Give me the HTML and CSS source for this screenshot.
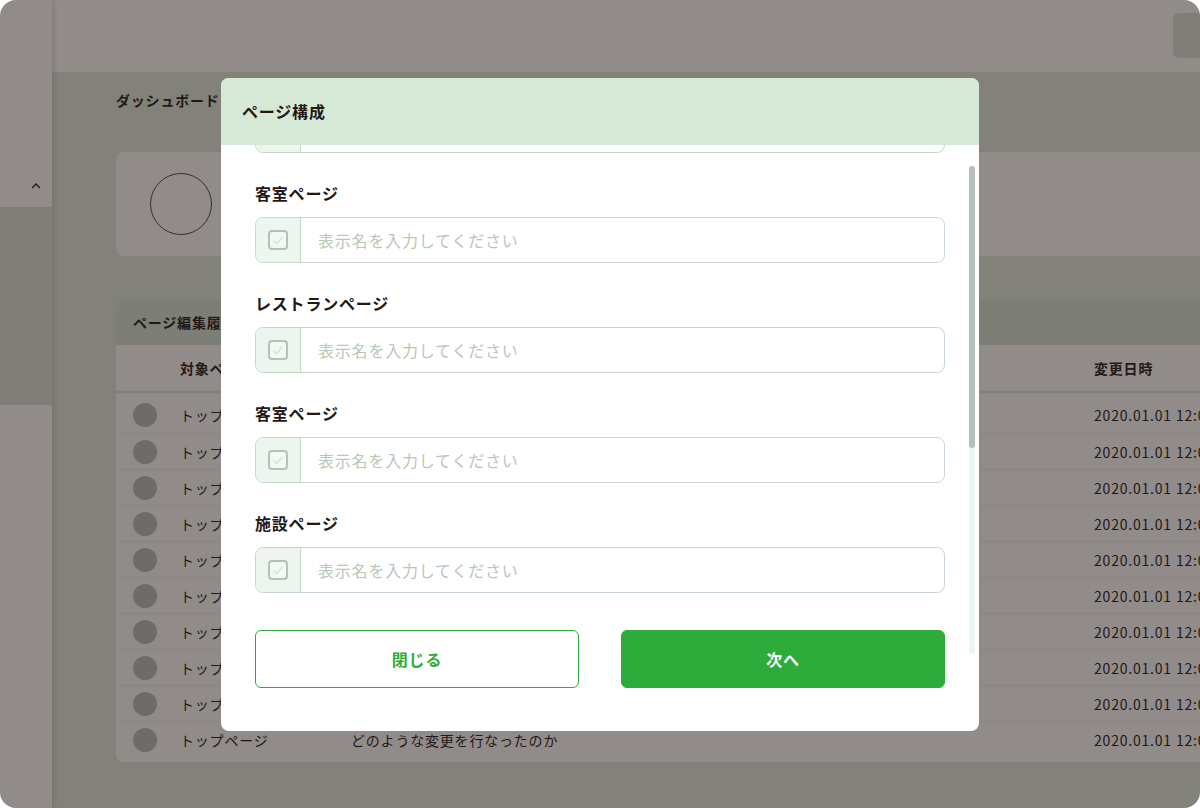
FILE: index.html
```html
<!DOCTYPE html>
<html lang="ja">
<head>
  <meta charset="UTF-8">
  <meta name="viewport" content="width=device-width, initial-scale=1.0">
  <title>ページ構成 - ダッシュボード</title>
  <link rel="stylesheet" href="styles.css">
</head>
<body>
  <div class="app">
    <aside class="sidebar">
      <div class="sidebar-head"></div>
      <div class="sidebar-item">
        <svg class="sidebar-chevron" width="10" height="6" viewBox="0 0 10 6">
          <polyline points="1,5 5,1 9,5" fill="none" stroke="#231815" stroke-width="1.4"/>
        </svg>
      </div>
      <div class="sidebar-sub"></div>
    </aside>

    <div class="page">
      <header class="topbar">
        <div class="topbar-action"></div>
      </header>

      <main class="main">
        <h2 class="main-title">ダッシュボード</h2>

        <section class="profile-card">
          <div class="profile-avatar"></div>
        </section>

        <section class="history">
          <h3 class="history-title">ページ編集履歴</h3>
          <div class="history-head">
            <span></span>
            <span>対象ページ</span>
            <span>変更内容</span>
            <span>変更日時</span>
          </div>
          <div class="history-body" id="historyBody">
            <!-- rows are rendered below -->
          </div>
        </section>
      </main>
    </div>

    <div class="overlay">
      <div class="modal">
        <div class="modal-header">ページ構成</div>
        <div class="modal-body">
          <div class="modal-content">
            <div class="field field-cut">
              <div class="field-box">
                <span class="field-check"></span>
                <input class="field-input" type="text" placeholder="表示名を入力してください">
              </div>
            </div>

            <div class="field">
              <label class="field-label">客室ページ</label>
              <div class="field-box">
                <span class="field-check"></span>
                <input class="field-input" type="text" placeholder="表示名を入力してください">
              </div>
            </div>

            <div class="field">
              <label class="field-label">レストランページ</label>
              <div class="field-box">
                <span class="field-check"></span>
                <input class="field-input" type="text" placeholder="表示名を入力してください">
              </div>
            </div>

            <div class="field">
              <label class="field-label">客室ページ</label>
              <div class="field-box">
                <span class="field-check"></span>
                <input class="field-input" type="text" placeholder="表示名を入力してください">
              </div>
            </div>

            <div class="field">
              <label class="field-label">施設ページ</label>
              <div class="field-box">
                <span class="field-check"></span>
                <input class="field-input" type="text" placeholder="表示名を入力してください">
              </div>
            </div>

            <div class="modal-actions">
              <button class="button button-outline">閉じる</button>
              <button class="button button-primary">次へ</button>
            </div>
          </div>

          <div class="modal-scrollbar">
            <div class="modal-scrollbar-thumb"></div>
          </div>
        </div>
      </div>
    </div>
  </div>

  <script>
    const historyBody = document.getElementById('historyBody');

    // Edit history rows (dummy data)
    for (let i = 0; i < 10; i++) {
      historyBody.innerHTML += `
        <div class="history-row">
          <span class="history-avatar"></span>
          <span>トップページ</span>
          <span>どのような変更を行なったのか</span>
          <span>2020.01.01 12:00</span>
        </div>
      `;
    }

    // Checkbox icon inside every field
    const checkIcon = `
      <svg width="20" height="20" viewBox="0 0 20 20">
        <rect x="1" y="1" width="18" height="18" rx="3" fill="#f4f8f4" stroke="#b3c2b3" stroke-width="2"/>
        <path d="M5.5 10.5l3 3 6-6.5" fill="none" stroke="#d4e1d4" stroke-width="1.3"/>
      </svg>
    `;
    document.querySelectorAll('.field-check').forEach(el => {
      el.innerHTML = checkIcon;
    });
  </script>
</body>
</html>
```

FILE: styles.css
```css
/* Reset & Fonts */
* {
  margin: 0;
  padding: 0;
  box-sizing: border-box;
}

body {
  font-family: 'Noto Sans CJK JP', 'Noto Sans', sans-serif;
  color: #231815;
  background-color: #ffffff;
  letter-spacing: 0.05em;
  overflow: hidden;
}

.app {
  position: relative;
  display: flex;
  width: 1200px;
  height: 808px;
  border-radius: 16px;
  overflow: hidden;
  background-color: #e1ece0;
}

/* Sidebar */
.sidebar {
  position: relative;
  z-index: 1;
  flex: 0 0 52px;
  background-color: #ffffff;
  box-shadow: 2px 0 5px rgba(0, 0, 0, 0.14);
}

.sidebar-head {
  height: 165px;
}

.sidebar-item {
  height: 42px;
  display: flex;
  justify-content: flex-end;
  align-items: center;
  padding-right: 11px;
}

.sidebar-sub {
  height: 198px;
  background-color: #dbe6d9;
}

/* Page */
.page {
  flex: 0 0 1268px;
  display: flex;
  flex-direction: column;
}

.topbar {
  height: 72px;
  background-color: #ffffff;
  display: flex;
  justify-content: flex-end;
  align-items: flex-start;
  padding: 13px 20px 0 0;
}

.topbar-action {
  width: 127px;
  height: 45px;
  border-radius: 6px;
  background-color: #dbe6d9;
}

.main {
  padding: 18px 60px 0 64px;
}

.main-title {
  font-size: 14px;
  font-weight: bold;
  line-height: 20px;
}

.profile-card {
  margin-top: 42px;
  height: 104px;
  padding: 21px 34px;
  background-color: #ffffff;
  border-radius: 8px;
}

.profile-avatar {
  width: 62px;
  height: 62px;
  border: 1px solid #4a4644;
  border-radius: 50%;
}

/* Edit history */
.history {
  margin-top: 43px;
  background-color: #ffffff;
  border-radius: 8px;
  overflow: hidden;
}

.history-title {
  height: 46px;
  display: flex;
  align-items: center;
  padding-left: 17px;
  font-size: 14px;
  font-weight: bold;
  background-color: #d6e4d4;
}

.history-head,
.history-row {
  display: grid;
  grid-template-columns: 47px 171px 1fr 149px;
  align-items: center;
  padding: 0 17px;
  font-size: 14px;
  white-space: nowrap;
}

.history-head {
  height: 48px;
  font-weight: bold;
  border-bottom: 2px solid #e1ece0;
}

.history-body {
  padding: 4px 0 5px;
}

.history-row {
  height: 36px;
}

.history-row + .history-row {
  border-top: 1px solid #eef3ed;
}

.history-avatar {
  width: 24px;
  height: 24px;
  border-radius: 50%;
  background-color: #b9c0b9;
}

/* Modal */
.overlay {
  position: absolute;
  inset: 0;
  z-index: 10;
  display: flex;
  justify-content: center;
  align-items: center;
  background-color: rgba(35, 24, 21, 0.5);
}

.modal {
  width: 758px;
  height: 653px;
  display: flex;
  flex-direction: column;
  background-color: #ffffff;
  border-radius: 8px;
  overflow: hidden;
}

.modal-header {
  flex: 0 0 67px;
  display: flex;
  align-items: center;
  padding: 0 21px;
  font-size: 16px;
  font-weight: bold;
  background-color: #d6e9d6;
}

.modal-body {
  flex: 1;
  display: flex;
  padding: 0 4px 0 34px;
  min-height: 0;
}

.modal-content {
  flex: 0 0 690px;
  display: flex;
  flex-direction: column;
  gap: 28px;
  padding-bottom: 43px;
  overflow: hidden;
}

.field {
  display: flex;
  flex-direction: column;
  gap: 12px;
}

.field-cut {
  margin-top: -38px;
}

.field-label {
  font-size: 16px;
  font-weight: bold;
  line-height: 24px;
}

.field-box {
  display: flex;
  height: 46px;
  border: 1px solid #c9d9c9;
  border-radius: 8px;
  overflow: hidden;
}

.field-check {
  flex: 0 0 45px;
  display: flex;
  justify-content: center;
  align-items: center;
  background-color: #eef5ee;
  border-right: 1px solid #c9d9c9;
}

.field-check svg {
  display: block;
}

.field-input {
  flex: 1;
  border: none;
  outline: none;
  padding: 0 17px;
  font-family: inherit;
  font-size: 16px;
  letter-spacing: 0.05em;
  color: #231815;
  background: transparent;
}

.field-input::placeholder {
  color: #b6c9b6;
}

.modal-actions {
  margin-top: auto;
  display: grid;
  grid-template-columns: 1fr 1fr;
  gap: 42px;
}

.button {
  height: 58px;
  border-radius: 6px;
  font-family: inherit;
  font-size: 16px;
  font-weight: bold;
  letter-spacing: 0.05em;
  cursor: pointer;
}

.button-outline {
  background-color: #ffffff;
  border: 1px solid #2eac3b;
  color: #2eac3b;
}

.button-primary {
  background-color: #2eac3b;
  border: 1px solid #2eac3b;
  color: #ffffff;
}

.modal-scrollbar {
  flex: 0 0 6px;
  height: 488px;
  margin: 21px 0 0 24px;
  border-radius: 3px;
  background-color: #eef4ee;
}

.modal-scrollbar-thumb {
  height: 282px;
  border-radius: 3px;
  background-color: #b8bfb8;
}
```
